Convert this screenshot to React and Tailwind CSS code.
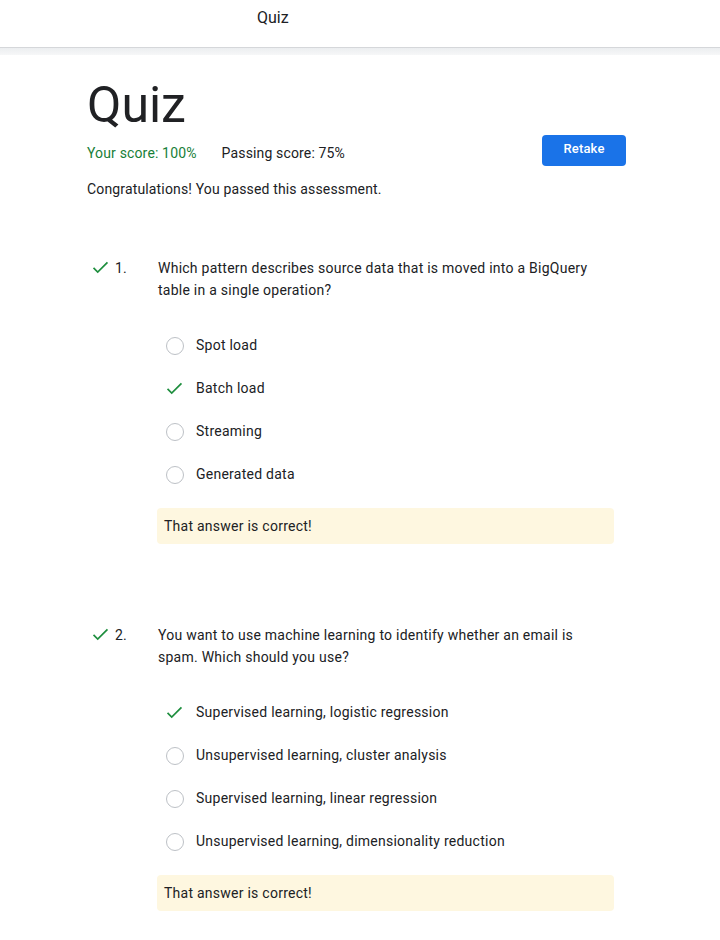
const questions = [
  {
    num: "1.",
    text: "Which pattern describes source data that is moved into a BigQuery table in a single operation?",
    options: [
      { label: "Spot load" },
      { label: "Batch load", picked: true },
      { label: "Streaming" },
      { label: "Generated data" },
    ],
  },
  {
    num: "2.",
    text: "You want to use machine learning to identify whether an email is spam. Which should you use?",
    options: [
      { label: "Supervised learning, logistic regression", picked: true },
      { label: "Unsupervised learning, cluster analysis" },
      { label: "Supervised learning, linear regression" },
      { label: "Unsupervised learning, dimensionality reduction" },
    ],
  },
];

function Check({ className }) {
  return (
    <svg viewBox="0 0 18 14" className={className} fill="none">
      <path d="M1.5 7.5l4.5 4.5L16.5 1.5" stroke="#1e8e3e" strokeWidth="1.8" />
    </svg>
  );
}

function Question({ q, first }) {
  return (
    <div className={first ? "mt-[58px] flex tracking-[0.25px]" : "mt-[80px] flex tracking-[0.25px]"}>
      <div className="w-[28px] shrink-0 pl-[5px] pt-[4px]">
        <Check className="h-[13px] w-[17px]" />
      </div>
      <div className="w-[43px] shrink-0 leading-[22px]">{q.num}</div>
      <div className="w-[456px]">
        <p className="leading-[22px]">{q.text}</p>
        <ul className="mt-[23px]">
          {q.options.map((opt) => (
            <li key={opt.label} className="flex h-[43px] items-center">
              <div className="flex w-[38px] shrink-0 justify-start pl-[8px]">
                {opt.picked ? (
                  <Check className="h-[13px] w-[17px]" />
                ) : (
                  <span className="block h-[18px] w-[18px] rounded-full border-[1.5px] border-[#bdc1c6]" />
                )}
              </div>
              <span>{opt.label}</span>
            </li>
          ))}
        </ul>
        <div className="-ml-px mt-[12px] flex h-[36px] items-center rounded-[4px] bg-[#fef7e0] px-[7px]">
          That answer is correct!
        </div>
      </div>
    </div>
  );
}

export default function App() {
  return (
    <div className="min-h-[940px] bg-white text-[14px] text-[#202124]" style={{ fontFamily: "Roboto, 'Liberation Sans', sans-serif" }}>
      <header className="h-[47px] pl-[257px] pt-[8px] text-[16px] leading-5">Quiz</header>
      <div className="h-[8px] border-t border-[#d5d7da] bg-gradient-to-b from-[#eceef0] to-[#f6f7f8]" />

      <main className="pl-[87px] pr-[94px] pb-10">
        <h1 className="mt-[20px] text-[50px] leading-[60px] font-normal">Quiz</h1>
        <div className="flex items-start justify-between tracking-[0.15px]">
          <div className="pt-[8px] leading-5">
            <span className="text-[#188038]">Your score: 100%</span>
            <span className="ml-[25px]">Passing score: 75%</span>
          </div>
          <button className="h-[31px] w-[84px] rounded-[4px] bg-[#1a73e8] pb-[3px] text-[13px] font-medium text-white">
            Retake
          </button>
        </div>
        <p className="mt-[13px] leading-5 tracking-[0.15px]">Congratulations! You passed this assessment.</p>

        {questions.map((q, i) => (
          <Question key={q.num} q={q} first={i === 0} />
        ))}
      </main>
    </div>
  );
}
